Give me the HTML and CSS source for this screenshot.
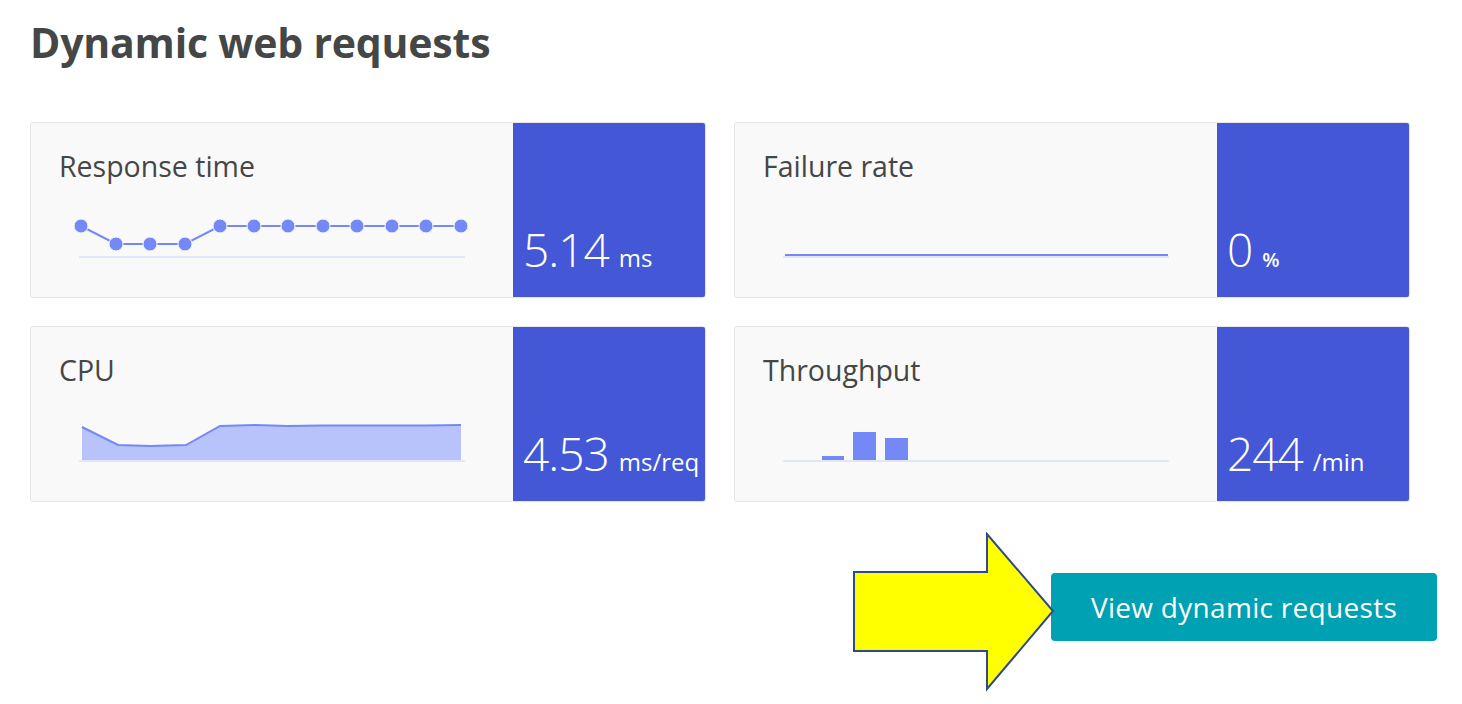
FILE: index.html
```html
<!DOCTYPE html>
<html lang="en">
<head>
<meta charset="utf-8">
<title>Dynamic web requests</title>
<link rel="stylesheet" href="styles.css">
</head>
<body>
<main class="page">
  <h1 class="title">Dynamic web requests</h1>
  <section class="grid">
    <div class="card">
      <div class="card-body">
        <div class="label">Response time</div>
        <svg class="chart" width="400" height="52" viewBox="0 0 400 52">
          <line x1="9" y1="45" x2="395" y2="45" class="base"/>
          <polyline class="stroke" points="11,14 46,32 80,32 115,32 150,14 184,14 218,14 253,14 287,14 322,14 356,14 391,14"/>
          <g class="dots">
            <circle cx="11" cy="14" r="7"/><circle cx="46" cy="32" r="7"/><circle cx="80" cy="32" r="7"/><circle cx="115" cy="32" r="7"/>
            <circle cx="150" cy="14" r="7"/><circle cx="184" cy="14" r="7"/><circle cx="218" cy="14" r="7"/><circle cx="253" cy="14" r="7"/>
            <circle cx="287" cy="14" r="7"/><circle cx="322" cy="14" r="7"/><circle cx="356" cy="14" r="7"/><circle cx="391" cy="14" r="7"/>
          </g>
        </svg>
      </div>
      <div class="metric"><div class="value"><span class="num">5.14</span><span class="unit">ms</span></div></div>
    </div>
    <div class="card">
      <div class="card-body">
        <div class="label">Failure rate</div>
        <svg class="chart" width="400" height="52" viewBox="0 0 400 52">
          <line x1="9" y1="45" x2="395" y2="45" class="base"/>
          <line x1="11" y1="43" x2="394" y2="43" class="stroke"/>
        </svg>
      </div>
      <div class="metric"><div class="value"><span class="num">0</span><span class="unit pct">%</span></div></div>
    </div>
    <div class="card">
      <div class="card-body">
        <div class="label">CPU</div>
        <svg class="chart" width="400" height="52" viewBox="0 0 400 52">
          <line x1="9" y1="45" x2="395" y2="45" class="base"/>
          <polygon class="area" points="12,11 48,29 80,30 116,29 150,10 185,9 218,10 252,9.5 287,9.5 322,9.5 356,9.5 391,9 391,44 12,44"/>
          <polyline class="stroke" points="12,11 48,29 80,30 116,29 150,10 185,9 218,10 252,9.5 287,9.5 322,9.5 356,9.5 391,9"/>
        </svg>
      </div>
      <div class="metric"><div class="value"><span class="num">4.53</span><span class="unit">ms/req</span></div></div>
    </div>
    <div class="card">
      <div class="card-body">
        <div class="label">Throughput</div>
        <svg class="chart" width="400" height="52" viewBox="0 0 400 52">
          <line x1="9" y1="45" x2="395" y2="45" class="base"/>
          <rect class="bar" x="48" y="40" width="22" height="4"/>
          <rect class="bar" x="79" y="16" width="23" height="28"/>
          <rect class="bar" x="111" y="22" width="23" height="22"/>
        </svg>
      </div>
      <div class="metric"><div class="value"><span class="num">244</span><span class="unit">/min</span></div></div>
    </div>
  </section>
  <div class="actions">
    <svg class="arrow" width="212" height="160" viewBox="0 0 212 160">
      <polygon points="2,40 135,40 135,2 201,79 135,157 135,119 2,119" />
    </svg>
    <button class="btn" type="button">View dynamic requests</button>
  </div>
</main>
</body>
</html>
```
FILE: styles.css
```css
html, body {
  margin: 0;
  padding: 0;
  background: #ffffff;
}
body {
  font-family: "Open Sans", "Liberation Sans", sans-serif;
  color: #454646;
}
.page {
  box-sizing: border-box;
  min-height: 704px;
  padding: 17px 0 0 30px;
  width: 1440px;
}
.title {
  margin: 0;
  font-size: 41px;
  font-weight: 700;
  line-height: 50px;
  color: #454646;
  letter-spacing: -0.2px;
}
.grid {
  margin-top: 55px;
  display: grid;
  grid-template-columns: 676px 676px;
  grid-auto-rows: 176px;
  column-gap: 28px;
  row-gap: 28px;
}
.card {
  display: flex;
  border: 1px solid #e6e6e6;
  border-radius: 3px;
  background: #f9f9f9;
  overflow: hidden;
}
.card-body {
  flex: 1;
  padding: 25px 0 0 28px;
  display: flex;
  flex-direction: column;
}
.label {
  font-size: 28.5px;
  line-height: 36px;
  color: #454646;
}
.chart {
  display: block;
  margin: 28px 0 0 11px;
}
.base {
  stroke: #e2e6fb;
  stroke-width: 2;
}
.stroke {
  fill: none;
  stroke: #7489f5;
  stroke-width: 2;
}
.dots circle {
  fill: #7489f5;
  stroke: #f9f9f9;
  stroke-width: 1;
}
.area {
  fill: #b8c3fb;
}
.bar {
  fill: #7489f5;
}
.metric {
  width: 192px;
  flex: none;
  box-sizing: border-box;
  background: #4357d7;
  color: #ffffff;
  display: flex;
  flex-direction: column;
  justify-content: flex-end;
  padding: 0 0 10px 10px;
}
.value {
  line-height: 52px;
  white-space: nowrap;
}
.num {
  font-size: 46px;
  font-weight: 300;
  letter-spacing: -1px;
}
.unit {
  font-size: 24px;
  line-height: 1;
  margin-left: 10px;
}
.unit.pct {
  font-size: 20px;
  font-weight: 600;
}
.actions {
  position: relative;
  display: flex;
  justify-content: flex-end;
  margin-top: 71px;
  width: 1407px;
}
.btn {
  width: 386px;
  height: 68px;
  border: none;
  border-radius: 4px;
  background: #00a1b2;
  color: #ffffff;
  font-family: "Open Sans", "Liberation Sans", sans-serif;
  font-size: 28px;
  font-weight: 500;
  letter-spacing: 0.3px;
  padding: 0;
}
.arrow {
  position: absolute;
  left: 822px;
  top: -41px;
  z-index: 2;
}
.arrow polygon {
  fill: #ffff00;
  stroke: #2e4a8c;
  stroke-width: 2;
}
```
